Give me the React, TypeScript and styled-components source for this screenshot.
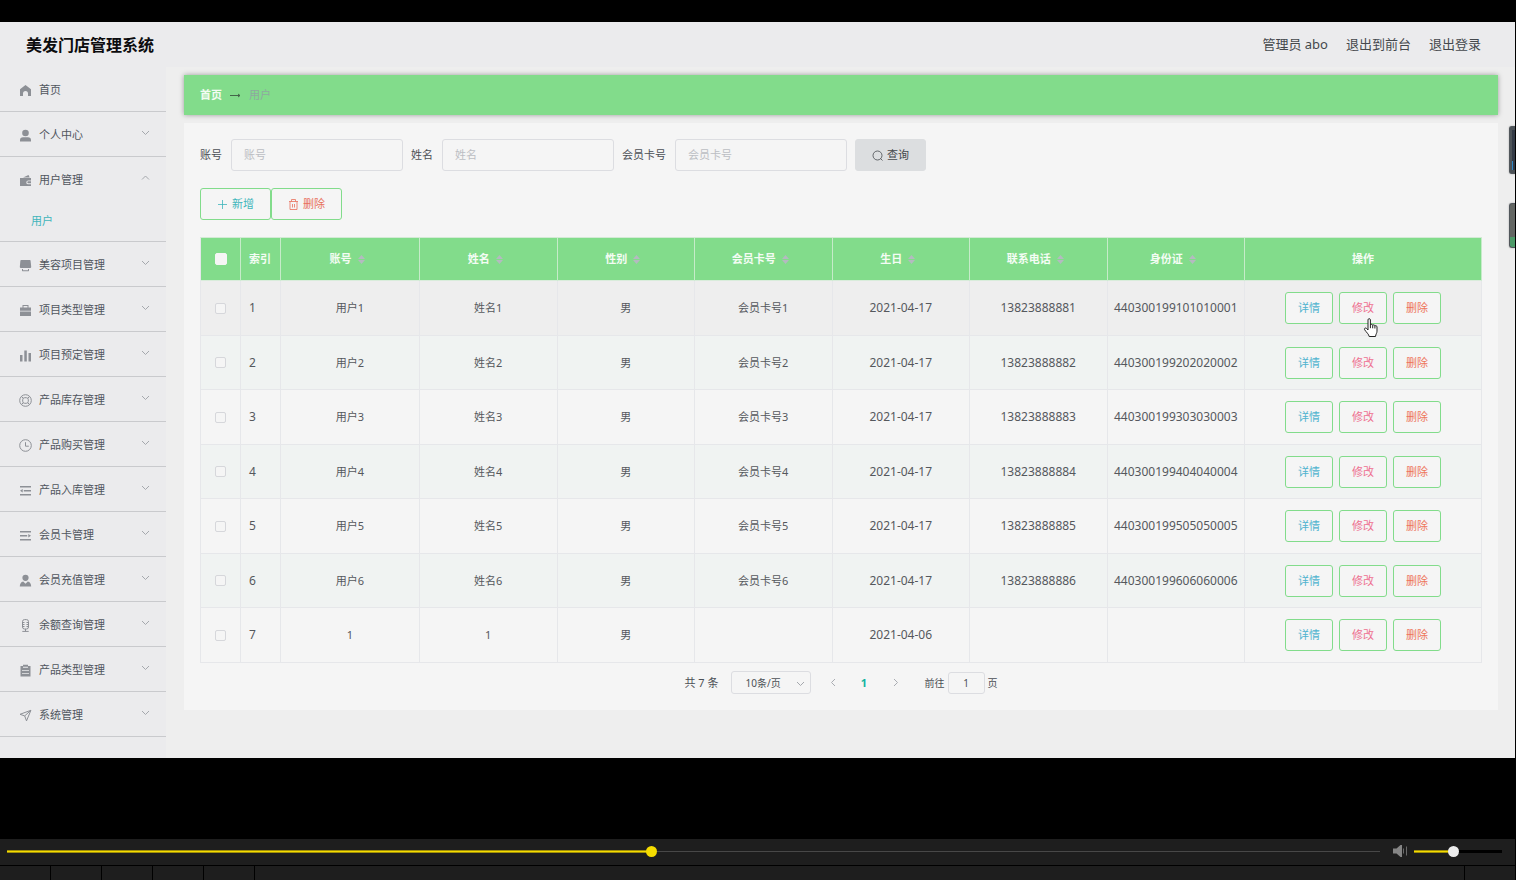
import React, { useState } from "react";
import styled, { createGlobalStyle, css } from "styled-components";

const green = "#82dc8b";
const teal = "#3fb5bb";

const GlobalStyle = createGlobalStyle`
  *, *::before, *::after { box-sizing: border-box; }
  body {
    margin: 0;
    background: #000;
    color: #4c5056;
    font-family: "Noto Sans", "Noto Sans CJK SC", sans-serif;
    font-size: 11px;
    line-height: 16px;
  }
  button, input, select { font: inherit; color: inherit; margin: 0; }
  a { color: inherit; text-decoration: none; }
`;

/* ---------- page frame ---------- */

const Screen = styled.div`
  display: flex;
  flex-direction: column;
  min-height: 100vh;
  padding-top: 22px;
`;

const Admin = styled.div`
  position: relative;
  margin-right: 1px;
  background: #ebebed;
`;

const Header = styled.header`
  display: flex;
  align-items: center;
  justify-content: space-between;
  height: 45px;
  padding: 0 34px 0 26px;
`;

const SiteTitle = styled.h1`
  margin: 0;
  color: #0c0c0e;
  font-size: 16px;
  line-height: 24px;
  font-weight: 700;
`;

const HeaderLinks = styled.nav`
  display: flex;
  gap: 18px;
  padding-bottom: 2px;
  font-size: 13px;
  line-height: 20px;
  color: #44484c;
`;

const Body = styled.div`
  display: flex;
`;

/* ---------- side menu ---------- */

const Sidebar = styled.nav`
  flex: none;
  width: 166px;
  padding-bottom: 21px;
`;

const MenuList = styled.ul`
  margin: 0;
  padding: 0;
  list-style: none;
`;

const MenuItem = styled.li`
  border-bottom: 1px solid #c9cacd;
`;

const MenuLink = styled.a`
  display: flex;
  align-items: center;
  height: 44px;
  padding: 2px 16px 0 19px;
  color: #50565e;
`;

const MenuIcon = styled.svg`
  flex: none;
  width: 13px;
  height: 13px;
  margin-right: 7px;
  color: #8d9096;
`;

const MenuText = styled.span`
  flex: 1;
`;

const Chevron = styled.svg`
  flex: none;
  width: 9px;
  height: 9px;
  margin-bottom: 5px;
  fill: none;
  stroke: #a5a8ad;
  stroke-width: 1;
`;

const SubLink = styled.a`
  display: block;
  height: 40px;
  padding: 12px 0 0 31px;
  color: ${teal};
`;

/* ---------- main area ---------- */

const Main = styled.main`
  flex: 1;
  min-width: 0;
  padding: 8px 17px 48px 18px;
  background: #eee;
`;

const Crumbs = styled.nav`
  display: flex;
  align-items: center;
  gap: 8px;
  height: 40px;
  margin-bottom: 8px;
  padding: 0 16px;
  background: ${green};
  box-shadow: 0 0 5px rgba(0, 0, 0, 0.35);
`;

const CrumbHome = styled.a`
  color: #f2fbf2;
  font-weight: 700;
`;

const CrumbCurrent = styled.span`
  color: #8ea8a0;
`;

const Card = styled.section`
  padding: 16px;
  background: #f5f5f5;
`;

const SearchForm = styled.form`
  display: flex;
  align-items: center;
  gap: 8px;
  margin-bottom: 17px;
`;

const Field = styled.label`
  display: flex;
  align-items: center;
  gap: 9px;
`;

const TextInput = styled.input`
  width: 172px;
  height: 32px;
  padding: 0 12px 2px;
  border: 1px solid #dcdde1;
  border-radius: 3px;
  background: #f5f5f5;
  outline: none;
  &::placeholder { color: #bcbec3; opacity: 1; }
`;

const Button = styled.button<{ $tone: string; $size?: "small" | "wide"; $solid?: boolean }>`
  display: inline-flex;
  align-items: center;
  justify-content: center;
  gap: 4px;
  position: relative;
  width: ${(p) => (p.$size === "small" ? 48 : 71)}px;
  height: 32px;
  padding: 0;
  border: 1px solid ${(p) => (p.$solid ? "#dcdee0" : green)};
  border-radius: 3px;
  background: ${(p) => (p.$solid ? "#dcdee0" : "#f5f5f5")};
  color: ${(p) => p.$tone};
  cursor: pointer;
`;

const ButtonIcon = styled.svg`
  width: 11px;
  height: 11px;
  fill: none;
  stroke: currentColor;
  stroke-width: 0.8;
`;

const Actions = styled.div`
  display: flex;
  margin-bottom: 17px;
`;

/* ---------- table ---------- */

const Table = styled.table`
  width: 100%;
  table-layout: fixed;
  border-collapse: separate;
  border-spacing: 0;
  border-left: 1px solid #e6e7ea;
  border-top: 1px solid #d3ead5;
`;

const Col = styled.col<{ $w?: number }>`
  ${(p) => p.$w && css`width: ${p.$w}px;`}
`;

const Th = styled.th<{ $left?: boolean }>`
  height: 43px;
  padding: 0 ${(p) => (p.$left ? 8 : 0)}px;
  border-right: 1px solid #c6ebc9;
  border-bottom: 1px solid #d9ecdb;
  background: ${green};
  color: #f4fcf4;
  font-weight: 700;
  text-align: ${(p) => (p.$left ? "left" : "center")};
  white-space: nowrap;
`;

const HeadLabel = styled.span`
  display: inline-flex;
  align-items: center;
`;

const SortIcon = styled.svg`
  width: 7px;
  height: 9px;
  margin: 0 6px;
  fill: #b4bac0;
`;

const Tr = styled.tr`
  height: 55px;
  background: #f5f5f5;
  &:nth-child(even) { height: 54px; background: #f0f3f2; }
  &:first-child { background: #eee; }
`;

const Td = styled.td<{ $left?: boolean; $numeric?: boolean }>`
  padding: 0 ${(p) => (p.$left ? 8 : 0)}px;
  border-right: 1px solid #e6e7ea;
  border-bottom: 1px solid #e6e7ea;
  text-align: ${(p) => (p.$left ? "left" : "center")};
  font-size: ${(p) => (p.$numeric ? 12 : 11)}px;
  white-space: nowrap;
  color: #55585d;
`;

const Check = styled.input<{ $head?: boolean }>`
  display: block;
  appearance: none;
  width: ${(p) => (p.$head ? 12 : 11)}px;
  height: ${(p) => (p.$head ? 12 : 11)}px;
  margin: 0 auto;
  border: 1px solid ${(p) => (p.$head ? "#f5f5f5" : "#d6d7db")};
  border-radius: 2px;
  background: #f5f5f5;
`;

const RowButtons = styled.div`
  display: flex;
  justify-content: center;
  gap: 6px;
`;

const Pointer = styled.svg`
  position: absolute;
  z-index: 2;
  left: 23px;
  top: 25px;
  width: 16px;
  height: 20px;
  pointer-events: none;
`;

/* ---------- pagination ---------- */

const Pager = styled.div`
  display: flex;
  align-items: center;
  justify-content: center;
  padding-top: 8px;
  font-size: 10px;
`;

const Total = styled.span`
  font-size: 11px;
`;

const PageSize = styled.span`
  position: relative;
  display: inline-flex;
  margin: 0 7px 0 12px;
`;

const SizeSelect = styled.select`
  appearance: none;
  width: 80px;
  height: 23px;
  padding: 0 14px;
  border: 1px solid #dcdde1;
  border-radius: 3px;
  background: #f5f5f5;
`;

const SelectArrow = styled(Chevron)`
  position: absolute;
  right: 6px;
  top: 8px;
`;

const PageButton = styled.button<{ $current?: boolean }>`
  display: inline-flex;
  align-items: center;
  justify-content: center;
  width: 31px;
  height: 22px;
  padding: 0;
  border: 0;
  background: none;
  font-size: 11px;
  font-weight: 700;
  color: ${(p) => (p.$current ? "#12b3a0" : "#a9acb2")};
`;

const Jump = styled.label`
  display: flex;
  align-items: center;
  gap: 3px;
  margin-left: 14px;
`;

const JumpInput = styled.input`
  width: 37px;
  height: 22px;
  padding: 0;
  border: 1px solid #dcdde1;
  border-radius: 3px;
  background: #f5f5f5;
  text-align: center;
`;

/* ---------- floating desktop gadgets ---------- */

const Gadget = styled.span<{ $top: number; $height: number; $fill: string }>`
  position: absolute;
  right: 0;
  top: ${(p) => p.$top}px;
  width: 6px;
  height: ${(p) => p.$height}px;
  padding: 3px 0 3px 2px;
  border: 1px solid #51565b;
  border-right: 0;
  border-radius: 3px 0 0 3px;
  background: ${(p) => p.$fill};
  box-shadow: 0 0 2px rgba(0, 0, 0, 0.3);
`;

const GadgetMeter = styled.span`
  display: block;
  height: 100%;
  background: linear-gradient(to top, #2f86c4 9px, #333a46 9px) left / 1px 100% no-repeat #333a46;
`;

/* ---------- player ---------- */

const Player = styled.footer`
  margin: auto 1px 0 0;
`;

const Controls = styled.div`
  display: flex;
  align-items: center;
  height: 26px;
  padding: 0 13px 2px 7px;
  background: #1e1e1e;
`;

const Slider = styled.input<{ $track: string; $thumb: string; $value: number; $line: number }>`
  appearance: none;
  height: 12px;
  background: none;
  &::-webkit-slider-runnable-track {
    height: 3px;
    background:
      linear-gradient(#a08f08 0 1px, #f5dc00 1px 2px, #a08f08 2px) 0 / ${(p) => p.$value}% 100% no-repeat,
      linear-gradient(${(p) => p.$track}, ${(p) => p.$track}) center / 100% ${(p) => p.$line}px no-repeat;
  }
  &::-webkit-slider-thumb {
    appearance: none;
    width: 11px;
    height: 11px;
    margin-top: -4px;
    border-radius: 50%;
    background: ${(p) => p.$thumb};
  }
`;

const Progress = styled(Slider)`
  flex: 1;
  min-width: 0;
`;

const Volume = styled(Slider)`
  width: 88px;
`;

const MuteButton = styled.button`
  display: flex;
  margin: 0 6px 0 12px;
  padding: 0;
  border: 0;
  background: none;
`;

const Strip = styled.div`
  display: flex;
  height: 14px;
  margin-top: 1px;
  gap: 1px;
`;

const StripCell = styled.span<{ $grow?: boolean }>`
  flex: ${(p) => (p.$grow ? "1" : "0 0 50px")};
  background: #1e1e1e;
`;

/* ---------- icons ---------- */

const stroke = { fill: "none", stroke: "currentColor" } as const;

const icons: Record<string, React.ReactNode> = {
  home: <path fill="currentColor" d="M6.5 1 12 5.3V12H9V9.5a2.500 2.500 0 0 0-5 0V12H1V5.3z" />,
  user: (
    <g fill="currentColor">
      <circle cx="6.5" cy="4" r="3.3" />
      <path d="M1 12.500V11c0-1.800 1.200-2.800 3-2.800h5c1.800 0 3 1 3 2.800v1.500z" />
    </g>
  ),
  wallet: (
    <g fill="currentColor">
      <path d="M4 3.500 9.500 1l1.200 2.500z" />
      <path fillRule="evenodd" d="M1 4h11v2.500H9.200a1.800 1.800 0 0 0 0 3.800H12V12H1z" />
      <path d="M9.300 7.300H12v2H9.300a1 1 0 0 1 0-2z" />
    </g>
  ),
  shop: (
    <g fill="currentColor">
      <path d="M2.200 1h8.600q.7 0 .8.700L12.200 8q0 1-1 1H1.800q-1 0-1-1l.6-6.300Q1.500 1 2.200 1z" />
      <path d="M3 10h1v1.200h5V10h1v1.800q0 .4-.5.4h-6Q3 12.200 3 11.800z" />
    </g>
  ),
  briefcase: (
    <g fill="currentColor">
      <path fillRule="evenodd" d="M3.500 1h6v2.500H12v3.200H1V3.500h2.500zM4.500 2v1.500h4V2z" />
      <path d="M1 7.500h11V12H1z" />
    </g>
  ),
  bars: <path fill="currentColor" d="M1 6h2.500v6.500H1zM5.300 1.500h2.500v11H5.300zM9.500 4H12v8.500H9.500z" />,
  ring: (
    <g {...stroke}>
      <circle cx="6.500" cy="6.500" r="5.800" />
      <rect x="3.700" y="3.700" width="5.600" height="5.600" rx="2" />
      <path d="M2.500 2.500l1.700 1.700M10.500 2.500 8.800 4.200M2.500 10.500l1.700-1.700M10.500 10.500 8.800 8.800" />
    </g>
  ),
  clock: (
    <g {...stroke}>
      <circle cx="6.5" cy="6.5" r="5.800" />
      <path d="M6.500 3.200v4h3.300" />
    </g>
  ),
  fold: (
    <g fill="currentColor">
      <path d="M1 2h11v1.500H1zM4.800 6h7.200v1.500H4.800zM1 10h11v1.500H1zM1 6.700l2.700-1.700v3.500z" />
    </g>
  ),
  unfold: (
    <g fill="currentColor">
      <path d="M1 2h11v1.500H1zM1 6h7.200v1.500H1zM1 10h11v1.500H1zM12 6.700 9.300 5v3.500z" />
    </g>
  ),
  member: (
    <g fill="currentColor">
      <circle cx="6.500" cy="3.800" r="3.100" />
      <path d="M.8 12.500c0-2.700 1.200-4.500 3.400-5l2.300 2.200 2.300-2.200c2.200.5 3.400 2.300 3.400 5z" />
    </g>
  ),
  mic: (
    <g {...stroke}>
      <rect x="3.500" y=".6" width="6" height="9.400" rx="2" />
      <path d="M6.500 10v2.300M3.300 12.400h6.400M3.500 3.500h2M3.500 5.500h2M3.500 7.500h2M9.500 3.500h-2M9.500 5.500h-2M9.500 7.500h-2" />
    </g>
  ),
  clipboard: (
    <path
      fill="currentColor"
      fillRule="evenodd"
      d="M1.500 2H4V.8h5V2h2.500v10.500h-10zM4 2.800v1h5v-1zM3 6v.8h7V6zM3 9v.8h7V9z"
    />
  ),
  send: (
    <g {...stroke} strokeLinejoin="round">
      <path d="M11.900 1.300 1 5.300l4.700 1.600 1.800 5z" />
      <path d="M11.900 1.300 5.700 6.900" />
    </g>
  ),
};

const MenuArrow = (props: { up?: boolean }) => (
  <Chevron viewBox="0 0 9 9" aria-hidden="true">
    <path d={props.up ? "M1 6.500 4.500 3 8 6.500" : "M1 3l3.500 3.500L8 3"} />
  </Chevron>
);

/* ---------- data ---------- */

const menu: { icon: string; text: string; children?: string[]; plain?: boolean }[] = [
  { icon: "home", text: "首页", plain: true },
  { icon: "user", text: "个人中心" },
  { icon: "wallet", text: "用户管理", children: ["用户"] },
  { icon: "shop", text: "美容项目管理" },
  { icon: "briefcase", text: "项目类型管理" },
  { icon: "bars", text: "项目预定管理" },
  { icon: "ring", text: "产品库存管理" },
  { icon: "clock", text: "产品购买管理" },
  { icon: "fold", text: "产品入库管理" },
  { icon: "unfold", text: "会员卡管理" },
  { icon: "member", text: "会员充值管理" },
  { icon: "mic", text: "余额查询管理" },
  { icon: "clipboard", text: "产品类型管理" },
  { icon: "send", text: "系统管理" },
];

const fields = ["账号", "姓名", "会员卡号"];
const sortable = ["账号", "姓名", "性别", "会员卡号", "生日", "联系电话", "身份证"];

const rows: string[][] = [
  ["用户1", "姓名1", "男", "会员卡号1", "2021-04-17", "13823888881", "440300199101010001"],
  ["用户2", "姓名2", "男", "会员卡号2", "2021-04-17", "13823888882", "440300199202020002"],
  ["用户3", "姓名3", "男", "会员卡号3", "2021-04-17", "13823888883", "440300199303030003"],
  ["用户4", "姓名4", "男", "会员卡号4", "2021-04-17", "13823888884", "440300199404040004"],
  ["用户5", "姓名5", "男", "会员卡号5", "2021-04-17", "13823888885", "440300199505050005"],
  ["用户6", "姓名6", "男", "会员卡号6", "2021-04-17", "13823888886", "440300199606060006"],
  ["1", "1", "男", "", "2021-04-06", "", ""],
];

const HandPointer = () => (
  <Pointer viewBox="0 0 16 20" aria-hidden="true">
    <path
      d="M5 1.800c0-1.500 2.400-1.500 2.400 0V7c.3-1 2.200-.9 2.300.3.500-.8 2.100-.5 2.200.6.700-.6 2.100-.2 2.100 1.100v4.200c0 2-1.200 2.700-1.500 5.300H6.200C5.800 16.200 3.500 14.500 1.600 11.700c-.7-1.300.9-2.300 1.900-1.300L5 12z"
      fill="#fff"
      stroke="#222"
      strokeLinejoin="round"
    />
    <path d="M7.400 7v3.200M9.700 7.300v3M11.900 8v2.500" stroke="#222" fill="none" />
  </Pointer>
);

export default function App() {
  const [progress, setProgress] = useState(469);
  const [volume, setVolume] = useState(44);

  return (
    <>
      <GlobalStyle />
      <Screen>
        <Admin>
          <Header>
            <SiteTitle>美发门店管理系统</SiteTitle>
            <HeaderLinks>
              <span>管理员 abo</span>
              <a href="#front">退出到前台</a>
              <a href="#logout">退出登录</a>
            </HeaderLinks>
          </Header>
          <Body>
            <Sidebar>
              <MenuList>
                {menu.map((item) => (
                  <MenuItem key={item.text}>
                    <MenuLink href="#menu">
                      <MenuIcon viewBox="0 0 13 13" aria-hidden="true">{icons[item.icon]}</MenuIcon>
                      <MenuText>{item.text}</MenuText>
                      {!item.plain && <MenuArrow up={!!item.children} />}
                    </MenuLink>
                    {item.children?.map((c) => (
                      <SubLink key={c} href="#user">{c}</SubLink>
                    ))}
                  </MenuItem>
                ))}
              </MenuList>
            </Sidebar>
            <Main>
              <Crumbs>
                <CrumbHome href="#home">首页</CrumbHome>
                <svg width="11" height="7" viewBox="0 0 11 7" fill="none" stroke="#44664a" aria-hidden="true">
                  <path d="M0 3.500h10M8 2l2 1.500L8 5" />
                </svg>
                <CrumbCurrent>用户</CrumbCurrent>
              </Crumbs>
              <Card>
                <SearchForm onSubmit={(e) => e.preventDefault()}>
                  {fields.map((f) => (
                    <Field key={f}>
                      {f}
                      <TextInput type="text" placeholder={f} />
                    </Field>
                  ))}
                  <Button type="submit" $tone="#44484c" $solid>
                    <ButtonIcon viewBox="0 0 11 11" aria-hidden="true">
                      <circle cx="5.500" cy="5.500" r="4.500" />
                      <path d="M8.500 8.500l2 2" />
                    </ButtonIcon>
                    查询
                  </Button>
                </SearchForm>
                <Actions>
                  <Button type="button" $tone={teal}>
                    <ButtonIcon viewBox="0 0 11 11" aria-hidden="true">
                      <path d="M5.500 1v9M1 5.500h9" />
                    </ButtonIcon>
                    新增
                  </Button>
                  <Button type="button" $tone="#e8705a">
                    <ButtonIcon viewBox="0 0 11 11" aria-hidden="true">
                      <path d="M1 2.500h9M3.500 2.500v-2h4v2M2 2.500v8h7v-8M4.500 5v3.500M6.500 5v3.500" />
                    </ButtonIcon>
                    删除
                  </Button>
                </Actions>
                <Table>
                  <colgroup>
                    <Col $w={40} />
                    <Col $w={40} />
                    <Col $w={139} />
                    {sortable.slice(1).map((s) => <Col key={s} />)}
                    <Col $w={237} />
                  </colgroup>
                  <thead>
                    <tr>
                      <Th><Check type="checkbox" aria-label="全选" $head /></Th>
                      <Th $left>索引</Th>
                      {sortable.map((s) => (
                        <Th key={s}>
                          <HeadLabel>
                            {s}
                            <SortIcon viewBox="0 0 7 9" aria-hidden="true">
                              <path d="M3.500 0 7 4H0zM3.500 9 7 5H0z" />
                            </SortIcon>
                          </HeadLabel>
                        </Th>
                      ))}
                      <Th>操作</Th>
                    </tr>
                  </thead>
                  <tbody>
                    {rows.map((row, i) => (
                      <Tr key={i}>
                        <Td><Check type="checkbox" aria-label={`选择 ${i + 1}`} /></Td>
                        <Td $left $numeric>{i + 1}</Td>
                        {row.map((value, j) => (
                          <Td key={j} $numeric={j > 3}>{value}</Td>
                        ))}
                        <Td>
                          <RowButtons>
                            <Button type="button" $size="small" $tone="#4fb3cf">详情</Button>
                            <Button type="button" $size="small" $tone="#ee7090">
                              修改
                              {i === 0 && <HandPointer />}
                            </Button>
                            <Button type="button" $size="small" $tone="#ee7458">删除</Button>
                          </RowButtons>
                        </Td>
                      </Tr>
                    ))}
                  </tbody>
                </Table>
                <Pager>
                  <Total>共 7 条</Total>
                  <PageSize>
                    <SizeSelect aria-label="每页条数" defaultValue="10">
                      <option value="10">10条/页</option>
                      <option value="20">20条/页</option>
                    </SizeSelect>
                    <SelectArrow viewBox="0 0 9 9" aria-hidden="true">
                      <path d="M1 3l3.500 3.500L8 3" />
                    </SelectArrow>
                  </PageSize>
                  <PageButton type="button" aria-label="上一页">
                    <svg width="9" height="9" viewBox="0 0 9 9" fill="none" stroke="currentColor">
                      <path d="M6 1 2.500 4.500 6 8" />
                    </svg>
                  </PageButton>
                  <PageButton type="button" $current>1</PageButton>
                  <PageButton type="button" aria-label="下一页">
                    <svg width="9" height="9" viewBox="0 0 9 9" fill="none" stroke="currentColor">
                      <path d="M3 1l3.500 3.500L3 8" />
                    </svg>
                  </PageButton>
                  <Jump>
                    前往
                    <JumpInput type="text" defaultValue="1" />
                    页
                  </Jump>
                </Pager>
              </Card>
            </Main>
          </Body>
          <Gadget $top={104} $height={48} $fill="#4d5358">
            <GadgetMeter />
          </Gadget>
          <Gadget $top={181} $height={45} $fill="linear-gradient(to top, #4d9a68 10px, #636663 10px)" />
        </Admin>
        <Player>
          <Controls>
            <Progress
              type="range"
              aria-label="播放进度"
              min={0}
              max={1000}
              value={progress}
              onChange={(e) => setProgress(Number(e.target.value))}
              $value={progress / 10}
              $track="#484848"
              $thumb="#f5dc00"
              $line={1}
            />
            <MuteButton type="button" aria-label="静音">
              <svg width="16" height="14" viewBox="0 0 16 14" aria-hidden="true">
                <path d="M1 4.500h3.500L8.500 1H10v12H8.500l-4-3.500H1z" fill="#858585" />
                <path d="M11.500 4.500v5M14.500 2.500v9" stroke="#6a6a6a" />
              </svg>
            </MuteButton>
            <Volume
              type="range"
              aria-label="音量"
              min={0}
              max={100}
              value={volume}
              onChange={(e) => setVolume(Number(e.target.value))}
              $value={volume}
              $track="#000"
              $thumb="#ececec"
              $line={3}
            />
          </Controls>
          <Strip>
            <StripCell />
            <StripCell />
            <StripCell />
            <StripCell />
            <StripCell />
            <StripCell $grow />
            <StripCell />
          </Strip>
        </Player>
      </Screen>
    </>
  );
}
